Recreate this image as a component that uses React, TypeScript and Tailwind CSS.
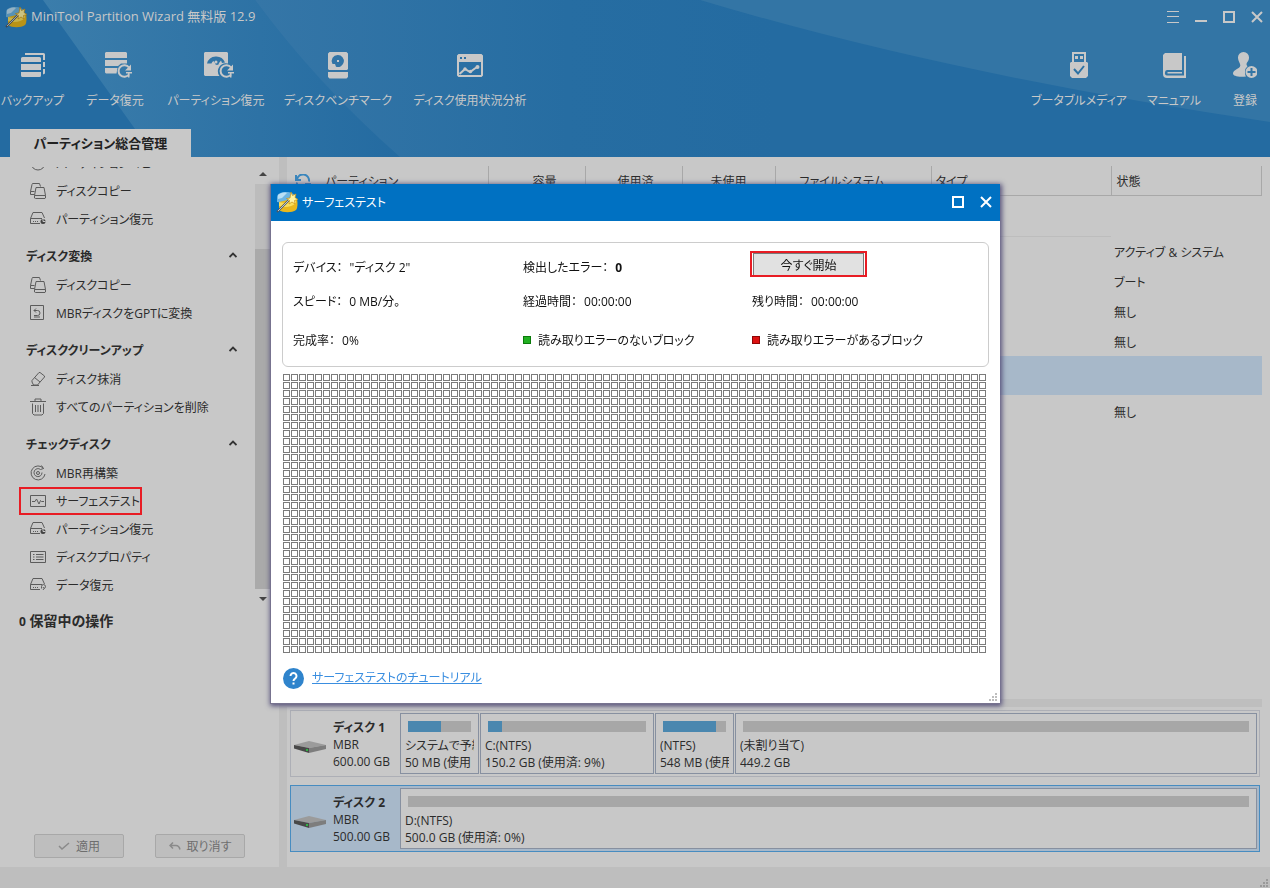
import type { ReactNode } from "react";

type ToolItem = { label: string; width: string; icon: ReactNode };

const leftTools: ToolItem[] = [
  { label: "バックアップ", width: "w-[57px]", icon: <BackupIcon /> },
  { label: "データ復元", width: "w-[56px]", icon: <DataRecoveryIcon /> },
  { label: "パーティション復元", width: "w-[94px]", icon: <PartitionRecoveryIcon /> },
  { label: "ディスクベンチマーク", width: "w-[98px]", icon: <BenchmarkIcon /> },
  { label: "ディスク使用状況分析", width: "w-[114px]", icon: <UsageIcon /> },
];

const rightTools: ToolItem[] = [
  { label: "ブータブルメディア", width: "w-[74px]", icon: <UsbIcon /> },
  { label: "マニュアル", width: "w-[52px]", icon: <ManualIcon /> },
  { label: "登録", width: "w-[26px]", icon: <RegisterIcon /> },
];

const groups = [
  {
    title: "ディスク変換",
    items: [
      { label: "ディスクコピー", icon: <CopyIcon /> },
      { label: "MBRディスクをGPTに変換", icon: <ConvertIcon /> },
    ],
  },
  {
    title: "ディスククリーンアップ",
    items: [
      { label: "ディスク抹消", icon: <EraserIcon /> },
      { label: "すべてのパーティションを削除", icon: <TrashIcon /> },
    ],
  },
  {
    title: "チェックディスク",
    items: [
      { label: "MBR再構築", icon: <RebuildIcon /> },
      { label: "サーフェステスト", icon: <PulseIcon />, marked: true },
      { label: "パーティション復元", icon: <DriveClockIcon /> },
      { label: "ディスクプロパティ", icon: <ListIcon /> },
      { label: "データ復元", icon: <DriveRestoreIcon /> },
    ],
  },
];

const columns = [
  { label: "容量", width: "w-[97px]", pad: "pl-11" },
  { label: "使用済", width: "w-[97px]", pad: "pl-8" },
  { label: "未使用", width: "w-[93px]", pad: "pl-7" },
  { label: "ファイルシステム", width: "w-[156px]", pad: "pl-6" },
  { label: "タイプ", width: "w-[180px]", pad: "pl-1" },
  { label: "状態", width: "", pad: "pl-[5px]" },
];

const rows = [
  { status: "", height: "h-[41px]", style: "" },
  { status: "アクティブ & システム", height: "h-[30px]", style: "" },
  { status: "ブート", height: "h-[30px]", style: "" },
  { status: "無し", height: "h-[30px]", style: "" },
  { status: "無し", height: "h-[30px]", style: "" },
  { status: "", height: "h-[39px]", style: "bg-[#a7b8c9]" },
  { status: "無し", height: "h-[32px]", style: "" },
];

const disks = [
  {
    name: "ディスク 1",
    type: "MBR",
    size: "600.00 GB",
    selected: false,
    parts: [
      { name: "システムで予約", info: "50 MB (使用", used: 52, width: "w-[79px]" },
      { name: "C:(NTFS)", info: "150.2 GB (使用済: 9%)", used: 9, width: "w-[174px]" },
      { name: "(NTFS)", info: "548 MB (使用", used: 84, width: "w-[79px]" },
      { name: "(未割り当て)", info: "449.2 GB", used: 0, width: "flex-1" },
    ],
  },
  {
    name: "ディスク 2",
    type: "MBR",
    size: "500.00 GB",
    selected: true,
    parts: [{ name: "D:(NTFS)", info: "500.0 GB (使用済: 0%)", used: 0, width: "flex-1" }],
  },
];

const blocks = Array.from({ length: 88 * 35 }, (_, i) => i);

function BackupIcon() {
  return (
    <svg width="24" height="24" viewBox="0 0 24 24" fill="currentColor">
      <path d="M1.500 4h17A1.500 1.500 0 0 1 20 5.500V9H0V5.500A1.500 1.500 0 0 1 1.500 4zM0 11h20v6H0zM0 19h20v3.500A1.500 1.500 0 0 1 18.500 24h-17A1.500 1.500 0 0 1 0 22.500z" />
      <path d="M4 0h18.500A1.500 1.500 0 0 1 24 1.500V7h-2V2H4zM22 9h2v5h-2zM22 16h2v4.500l-2 1z" />
    </svg>
  );
}

function DataRecoveryIcon() {
  return (
    <svg width="33" height="27" viewBox="-6 0 33 27" fill="currentColor">
      <path d="M1 0h20l1 1v5H0V1zM0 8h22v3.500h-6L13 14H0zM0 16h12.500l-1 5.500H1l-1-1z" />
      <path d="M24 15.500A5.800 5.800 0 1 0 24 22.500" fill="none" stroke="currentColor" strokeWidth="2" />
      <path d="M20 18.500h6v-6zM21 20h6v1.500h-2.500v4H23V21.500h-2z" />
    </svg>
  );
}

function PartitionRecoveryIcon() {
  return (
    <svg width="36" height="27" viewBox="-6 0 36 27" fill="currentColor">
      <path fillRule="evenodd" d="M1 0h22l1 1v10.500a8 8 0 0 0-8.500 12.500H1l-1-1V1zM3 11.500h4.500A4.500 4.500 0 0 1 9.500 9L11 11a2 2 0 0 0 4 0l2-2.500 1 2.500 3-.5A9.500 9.500 0 0 0 3 11.500z" />
      <circle cx="12" cy="10" r="1.500" />
      <path d="M27 15.500A5.800 5.800 0 1 0 27 22.500" fill="none" stroke="currentColor" strokeWidth="2" />
      <path d="M23 18.500h6v-6zM24 20h6v1.500h-2.500v4H26V21.500h-2z" />
    </svg>
  );
}

function BenchmarkIcon() {
  return (
    <svg width="20" height="27" viewBox="0 0 20 27" fill="currentColor">
      <path fillRule="evenodd" d="M1.500 0h17L20 1.500V17l-1 1H1l-1-1V1.500zM10 3a6 6 0 0 0-5.500 9L7 12l1 2.700A6 6 0 1 0 10 3z" />
      <path d="M9 8h2v2H9zM0 20h20v5l-1.500 1.500h-17L0 25z" />
    </svg>
  );
}

function UsageIcon() {
  return (
    <svg width="26" height="23" viewBox="0 0 26 23" fill="currentColor">
      <path fillRule="evenodd" d="M1.500 0h23L26 1.500v20L24.500 23h-23L0 21.500v-20zM2 8v13h22V8zM3 3v2h2V3zM7 3v2h2V3z" />
      <path d="M2.500 20 8 15l5 3 7-5" fill="none" stroke="currentColor" strokeWidth="2" />
      <circle cx="8" cy="15" r="1.700" />
      <circle cx="13.500" cy="17.500" r="1.700" />
      <circle cx="20.500" cy="13" r="2" />
    </svg>
  );
}

function UsbIcon() {
  return (
    <svg width="18" height="26" viewBox="0 0 18 26" fill="currentColor">
      <path fillRule="evenodd" d="M2 0h14v10h1l1 1v13l-2 2H2l-2-2V11l1-1h1zM4 2v8h10V2z" />
      <path d="M5 4h3v3H5zM10 4h3v3h-3z" />
      <path d="m4 17 4 4.500 6-7.500" fill="none" stroke="#2d72a4" strokeWidth="2" />
    </svg>
  );
}

function ManualIcon() {
  return (
    <svg width="23" height="25" viewBox="0 0 23 25" fill="currentColor">
      <path d="M2 0h17v17H4a2.500 2.500 0 0 0-2 2.500A2.500 2.500 0 0 0 4 22.500h17V3h2v22H4a4 4 0 0 1-4-4V2z" />
      <path d="M4.500 19H19v1.500H4.500z" />
    </svg>
  );
}

function RegisterIcon() {
  return (
    <svg width="24" height="26" viewBox="0 0 24 26" fill="currentColor">
      <path d="M10.500 0a5.500 5.500 0 0 1 5.500 6c0 3-2.500 4.500-2.500 6 0 1 .5 1.800 1 2.300A7 7 0 0 0 12 20c0 2 .4 3.500 1 4.500-8 .8-13-.5-13-3 0-4 7-4.500 7.300-8C7.500 11.500 5 9 5 6a5.500 5.500 0 0 1 5.500-6z" />
      <path fillRule="evenodd" d="M18.500 14a6 6 0 1 1 0 12 6 6 0 0 1 0-12zM17.500 16v3h-3v2h3v3h2v-3h3v-2h-3v-3z" />
    </svg>
  );
}

function SideIcon({ children }: { children: ReactNode }) {
  return (
    <svg width="16" height="16" viewBox="0 0 16 16" fill="none" stroke="#5c5c5c" strokeWidth="1">
      {children}
    </svg>
  );
}

function PieIcon() {
  return (
    <SideIcon>
      <circle cx="8" cy="8" r="7" />
      <path d="M8 1v7h7" />
    </SideIcon>
  );
}

function CopyIcon() {
  return (
    <SideIcon>
      <path d="M4.500 11.500h-4v-3L2 1.500 2.500.5h7l1 3M.5 8.500h4M6 4.500h8l1.500 8v2.500l-.5.500H5.500L4.500 15v-2.500zM4.500 12.500h11" />
    </SideIcon>
  );
}

function ConvertIcon() {
  return (
    <SideIcon>
      <path d="M.5.500h13v14H.5zM4 5.500h3.500a2.500 2.500 0 0 1 0 5H4M6 3.500l-2 2 2 2M4 12h6" />
    </SideIcon>
  );
}

function EraserIcon() {
  return (
    <SideIcon>
      <path d="m2 9.500 7-8h1l4.500 3.500v1l-7 8H3.500L2 11zM4.500 6.500 10 11M1 14.500h8" />
    </SideIcon>
  );
}

function TrashIcon() {
  return (
    <svg width="16" height="18" viewBox="0 0 16 18" fill="none" stroke="#5c5c5c">
      <path d="M0 3.500h16M5 3V1h6v2M2.500 5.500v10l1.500 1.500h8l1.500-1.500v-10M5.500 7v7M8 7v7M10.500 7v7" />
    </svg>
  );
}

function RebuildIcon() {
  return (
    <SideIcon>
      <path d="M13.500 3.500A7 7 0 1 0 15 9M11.500.5l2 3-3 1M10.500 4.500a4 4 0 1 0 1.500 3" />
      <circle cx="8" cy="8" r="1.500" />
    </SideIcon>
  );
}

function PulseIcon() {
  return (
    <SideIcon>
      <path d="M.5 2.500h15v11H.5zM2 8.500h3L6.500 6l2.500 5 1.500-3.500 1 1H14" />
    </SideIcon>
  );
}

function DriveClockIcon() {
  return (
    <SideIcon>
      <path d="M10 12.500H.5v-5L3 1.500h9L14.500 7M.5 7.500H12M3 10.500h1M5 10.500h1M7 10.500h1" />
      <circle cx="13" cy="10.500" r="2.500" fill="#444" stroke="none" />
      <path d="M13 8v2.500h2.500" stroke="#c8c8c8" />
    </SideIcon>
  );
}

function DriveRestoreIcon() {
  return (
    <SideIcon>
      <path d="M10 12.500H.5v-5L3 1.500h9L14.500 7M.5 7.500H12M3 10.500h1M5 10.500h1M7 10.500h1M11.500 11.500v-2a2 2 0 1 1 2.500 2M13 10l1 1.500-1 1.500" />
    </SideIcon>
  );
}

function ListIcon() {
  return (
    <SideIcon>
      <path d="M.5 2.500h15v11H.5zM3 5.500h1.500M3 8h1.500M3 10.500h1.500M6 5.500h7.500M6 8h7.500M6 10.500h7.500" />
    </SideIcon>
  );
}

function WizardLogo({ dim = false }: { dim?: boolean }) {
  return (
    <svg width="22" height="22" viewBox="0 0 22 22" className={dim ? "brightness-[.8]" : ""}>
      <path d="M1 6c0-3 4-5 9-5s8 2 9 4L8 12l-7-1z" fill="#6db5e2" />
      <path d="M2 4c2-2 6-3 9-2L6 7 2 8z" fill="#b9dff5" />
      <path d="M3 11 20 7c2 1 2 10 0 12-4 3-13 3-17 0z" fill="#e9b81c" />
      <path d="M3 11c5 2 12 0 17-4v5c-4 4-11 5-17 3z" fill="#f9de5c" />
      <path d="M1 21 14 8" stroke="#4d5a66" strokeWidth="2" />
      <path d="M2 20 14 8" stroke="#dfe5ea" strokeWidth=".8" />
      <path d="m15 1 1.500 3.500L20 3l-1 3.500 3 2-3.500 1 .5 3.500-3-2-3 2 .5-3.500-3-2L14 7z" fill="#fff3a0" stroke="#c98f10" strokeWidth=".7" />
    </svg>
  );
}

function DriveImage() {
  return (
    <svg width="34" height="20" viewBox="0 -6 34 20">
      <path d="M1 5 16 1l17 4-17 3z" fill="#9b9b9b" />
      <path d="m1 5 15 3v5L1 8.500z" fill="#484848" />
      <path d="m16 8 17-3v4l-17 4z" fill="#7d7d7d" />
      <path d="M13 9h2v2h-2z" fill="#2fb344" />
    </svg>
  );
}

function Grip() {
  return (
    <svg width="8" height="8" viewBox="0 0 8 8" fill="currentColor">
      <path d="M6 0h2v2H6zM3 3h2v2H3zM6 3h2v2H6zM0 6h2v2H0zM3 6h2v2H3zM6 6h2v2H6z" />
    </svg>
  );
}

function CloseIcon() {
  return (
    <svg width="12" height="12" viewBox="0 0 12 12">
      <path d="m1 1 10 10M11 1 1 11" stroke="currentColor" strokeWidth="2" />
    </svg>
  );
}

function HeaderBackdrop() {
  return (
    <svg className="absolute inset-0 h-full w-full" viewBox="0 0 1270 157" preserveAspectRatio="none">
      <defs>
        <linearGradient id="beam" x1="0" x2="1">
          <stop offset="0" stopColor="#3b7dab" />
          <stop offset="1" stopColor="#246ba1" />
        </linearGradient>
        <linearGradient id="middle" x1="0" x2="1">
          <stop offset="0" stopColor="#3576a7" />
          <stop offset=".6" stopColor="#266da2" />
          <stop offset="1" stopColor="#246ba1" />
        </linearGradient>
      </defs>
      <path d="M43 0h212q62 84 145 157H155z" fill="url(#beam)" />
      <path d="M255 0h520v157H400Q317 84 255 0z" fill="url(#middle)" />
      <path d="M700 0q250 75 570 122V0z" fill="#3375a5" />
    </svg>
  );
}

function ToolButton({ item }: { item: ToolItem }) {
  return (
    <button className={`flex flex-col items-center ${item.width}`}>
      <span className="flex h-[30px] items-center justify-center">{item.icon}</span>
      <span className="mt-[9px] h-6 leading-6 whitespace-nowrap">{item.label}</span>
    </button>
  );
}

function Header() {
  return (
    <header className="relative bg-[#246ba1] text-[#c8c8c8]">
      <HeaderBackdrop />
      <div className="relative flex h-[34px] items-center pr-[7px] pl-[5px]">
        <WizardLogo dim />
        <h1 className="ml-1 flex-1 text-[13px]">MiniTool Partition Wizard 無料版 12.9</h1>
        <div className="flex items-center gap-4">
          <button aria-label="メニュー">
            <svg width="12" height="12" viewBox="0 0 12 12">
              <path d="M0 .5h12M0 5.500h12M0 11.500h12" stroke="currentColor" />
            </svg>
          </button>
          <button aria-label="最小化" className="flex h-3 w-3 items-end">
            <span className="mb-px h-[2px] w-3 bg-current" />
          </button>
          <button aria-label="最大化" className="h-3 w-3 border-2 border-current" />
          <button aria-label="閉じる"><CloseIcon /></button>
        </div>
      </div>
      <nav className="relative flex h-[95px] justify-between pt-4 pr-3 pl-1">
        <div className="flex items-start gap-[26px]">
          {leftTools.map((item) => <ToolButton key={item.label} item={item} />)}
        </div>
        <div className="flex items-start gap-8">
          {rightTools.map((item) => <ToolButton key={item.label} item={item} />)}
        </div>
      </nav>
      <div className="relative flex pl-[10px]">
        <button className="h-7 w-[181px] bg-[#c8c8c8] pt-[2px] text-[13px] font-bold text-[#222]">パーティション総合管理</button>
      </div>
    </header>
  );
}

function SideItem({ label, icon, marked }: { label: string; icon: ReactNode; marked?: boolean }) {
  return (
    <div className="flex h-7 shrink-0 pl-[19px]">
      <button className={`flex h-7 items-center border-2 pl-[9px] whitespace-nowrap ${marked ? "border-[#e81c24]" : "border-transparent"}`}>
        <span className="flex w-[26px] items-center">{icon}</span>
        <span className="pt-[2px]">{label}</span>
      </button>
    </div>
  );
}

function Sidebar() {
  return (
    <aside className="flex w-[279px] shrink-0 flex-col pt-[10px]">
      <div className="flex">
        <div className="flex-1 pb-[7px]">
          <div className="flex h-[10px] flex-col justify-end overflow-hidden">
            <SideItem label="パーティションコピー" icon={<PieIcon />} />
          </div>
          <SideItem label="ディスクコピー" icon={<CopyIcon />} />
          <SideItem label="パーティション復元" icon={<DriveClockIcon />} />
          {groups.map((group) => (
            <section key={group.title} className="pt-2">
              <button className="flex h-[30px] w-full items-center justify-between pr-[18px] pl-[26px] font-bold">
                <span className="pt-px">{group.title}</span>
                <svg width="8" height="8" viewBox="0 0 8 8" fill="none">
                  <path d="m.5 5 3.500-3.500L7.500 5" stroke="#333" strokeWidth="1.800" />
                </svg>
              </button>
              {group.items.map((item) => <SideItem key={item.label} {...item} />)}
            </section>
          ))}
        </div>
        <div className="mr-2 flex w-4 flex-col items-center">
          <svg width="8" height="17" viewBox="0 0 8 17"><path d="m0 9 4-4 4 4z" fill="#444" /></svg>
          <div className="h-[65px] w-full bg-[#bcbcbc]" />
          <div className="w-full flex-1 bg-[#aaa]" />
          <svg width="8" height="17" viewBox="0 0 8 17"><path d="m0 8 4 4 4-4z" fill="#444" /></svg>
        </div>
      </div>
      <p className="mt-[5px] pl-[19px] text-[14px] leading-5 font-bold">
        <span className="text-xs">0</span> 保留中の操作
      </p>
      <div className="mt-auto mb-[9px] flex gap-[31px] pl-[34px] text-[#6e6e6e]">
        <button className="flex h-6 w-[90px] items-center justify-center gap-[6px] rounded-xs border border-[#a8a8a8] bg-[#bebebe]">
          <svg width="12" height="8" viewBox="0 0 12 8" fill="none"><path d="m1 4 3 3 7-6" stroke="#8a8a8a" strokeWidth="1.500" /></svg>
          <span className="pt-px">適用</span>
        </button>
        <button className="flex h-6 w-[90px] items-center justify-center gap-[6px] rounded-xs border border-[#a8a8a8] bg-[#bebebe]">
          <svg width="12" height="9" viewBox="0 0 12 9" fill="none"><path d="M4 .5 1 3.500l3 3M1 3.500h6q3 0 4 4" stroke="#8a8a8a" strokeWidth="1.500" /></svg>
          <span className="pt-px">取り消す</span>
        </button>
      </div>
    </aside>
  );
}

function PartitionTable() {
  return (
    <table className="w-full table-fixed border-collapse text-left">
      <thead>
        <tr className="h-[29px] border-b border-[#a8a8a8]">
          <th className="w-[201px] border-r border-[#a8a8a8] pt-[3px] pl-2 font-normal">
            <span className="flex items-center gap-[14px]">
              <svg width="16" height="16" viewBox="0 0 16 16" fill="none">
                <path d="M2 5.500a6 6 0 0 1 12 2M14 10.500a6 6 0 0 1-12-2M1 1v5h5M15 15v-5h-5" stroke="#3a86bd" strokeWidth="2" />
              </svg>
              パーティション
            </span>
          </th>
          {columns.map((col) => (
            <th key={col.label} className={`border-r border-[#a8a8a8] pt-[3px] font-normal ${col.width} ${col.pad}`}>{col.label}</th>
          ))}
        </tr>
      </thead>
      <tbody>
        {rows.map((row, index) => (
          <tr key={index} className={`${row.height} ${row.style}`}>
            <td colSpan={6} className={index === 0 ? "border-b border-[#bdbdbd]" : ""} />
            <td className="pt-1 pl-[3px]">{row.status}</td>
          </tr>
        ))}
      </tbody>
    </table>
  );
}

function DiskMap() {
  return (
    <div className="flex flex-col gap-2 pt-[3px] pr-[2px] pb-[15px] pl-[3px]">
      {disks.map((disk) => (
        <div
          key={disk.name}
          className={`flex h-[67px] border p-[2px] leading-[17px] ${disk.selected ? "border-[#478cc0] bg-[#a7b8c9]" : "border-[#adafb6]"}`}
        >
          <div className="flex w-[107px] shrink-0 items-center">
            <DriveImage />
            <div className="ml-[6px] pt-[2px] whitespace-nowrap">
              <p className="font-bold">{disk.name}</p>
              <p>{disk.type}</p>
              <p>{disk.size}</p>
            </div>
          </div>
          <div className="flex min-w-0 flex-1 gap-px">
            {disk.parts.map((part) => (
              <div key={part.name} className={`border border-[#8790a0] bg-[#c8c8c8] px-1 pt-[7px] ${part.width}`}>
                <div className="mx-[3px] mb-[5px] h-[11px] bg-[#a7a7a7]">
                  <div className="h-full bg-[#4a87af]" style={{ width: `${part.used}%` }} />
                </div>
                <p className="overflow-hidden whitespace-nowrap">{part.name}</p>
                <p className="overflow-hidden whitespace-nowrap">{part.info}</p>
              </div>
            ))}
          </div>
        </div>
      ))}
    </div>
  );
}

function Field({ label, children }: { label: string; children: ReactNode }) {
  return (
    <p className="flex gap-[7px]">
      <span>{label}：</span>
      <span>{children}</span>
    </p>
  );
}

function Legend({ tone, children }: { tone: string; children: ReactNode }) {
  return (
    <span className="flex items-center gap-[7px]">
      <span className={`mb-[2px] h-2 w-2 border ${tone}`} />
      {children}
    </span>
  );
}

function SurfaceTestDialog() {
  return (
    <div className="fixed inset-0 grid place-items-center">
      <div
        role="dialog"
        aria-labelledby="dialog-title"
        className="w-[730px] border-b border-l border-[#77738f] bg-white text-[#111] shadow-[1px_1px_5px_1px_#55507a]"
      >
        <div className="flex h-[37px] items-center bg-[#0071c2] pr-2 pb-[2px] pl-[5px] text-white">
          <WizardLogo />
          <h2 id="dialog-title" className="ml-1 flex-1 pt-[2px]">サーフェステスト</h2>
          <button aria-label="最大化" className="mr-4 h-3 w-3 border-2 border-white" />
          <button aria-label="閉じる"><CloseIcon /></button>
        </div>
        <div className="px-[11px] pt-[21px]">
          <div className="grid h-[125px] grid-cols-[230px_229px_1fr] grid-rows-[34px_34px_44px] items-center rounded-md border border-[#ccc] pt-2 pl-[10px]">
            <Field label="デバイス">&quot;ディスク 2&quot;</Field>
            <Field label="検出したエラー"><b>0</b></Field>
            <div className="self-start">
              <button className="-ml-[2px] flex h-[26px] w-[117px] border-2 border-[#e81c24] bg-white px-px">
                <span className="flex h-full w-full items-center justify-center border border-b-0 border-[#7a7a7a] bg-[#e1e1e1] pt-[3px]">今すぐ開始</span>
              </button>
            </div>
            <Field label="スピード">0 MB/分。</Field>
            <Field label="経過時間">00:00:00</Field>
            <Field label="残り時間">00:00:00</Field>
            <Field label="完成率">0%</Field>
            <Legend tone="border-[#0a7a0a] bg-[#22b022]">読み取りエラーのないブロック</Legend>
            <Legend tone="border-[#8e0505] bg-[#dd1111]">読み取りエラーがあるブロック</Legend>
          </div>
          <div className="mt-[7px] ml-px grid grid-cols-[repeat(88,7px)] gap-px">
            {blocks.map((block) => (
              <span key={block} className="h-[7px] border border-[#7b7b7b]" />
            ))}
          </div>
        </div>
        <div className="flex h-[50px] items-center gap-2 pl-3">
          <svg width="21" height="21" viewBox="0 0 21 21" fill="none">
            <circle cx="10.500" cy="10.500" r="10.500" fill="#2f84cc" />
            <path d="M7.500 8a3 3 0 1 1 4.500 2.600c-1 .6-1.500 1.100-1.500 2.400" stroke="#fff" strokeWidth="2" />
            <path d="M9.500 14.500h2v2h-2z" fill="#fff" />
          </svg>
          <p className="flex-1">
            <a href="#tutorial" className="text-[#3a8ee0] underline">サーフェステストのチュートリアル</a>
          </p>
          <span className="mr-[3px] mb-[2px] self-end text-[#bebebe]"><Grip /></span>
        </div>
      </div>
    </div>
  );
}

export default function App() {
  return (
    <div className="flex min-h-screen flex-col bg-[#c8c8c8] font-['Open_Sans','Noto_Sans_CJK_JP',sans-serif] text-xs text-[#2b2b2b] [font-feature-settings:'palt']">
      <Header />
      <main className="flex flex-1">
        <Sidebar />
        <div className="w-2 shrink-0 bg-[#bebebe]" />
        <div className="flex min-w-0 flex-1 flex-col pt-[9px] pr-2">
          <div className="flex-1">
            <PartitionTable />
          </div>
          <div className="h-2 bg-[#bebebe]" />
          <DiskMap />
        </div>
      </main>
      <footer className="flex h-[21px] items-end justify-end bg-[#bebebe] pr-[2px] pb-px text-[#9a9a9a]">
        <Grip />
      </footer>
      <SurfaceTestDialog />
    </div>
  );
}
